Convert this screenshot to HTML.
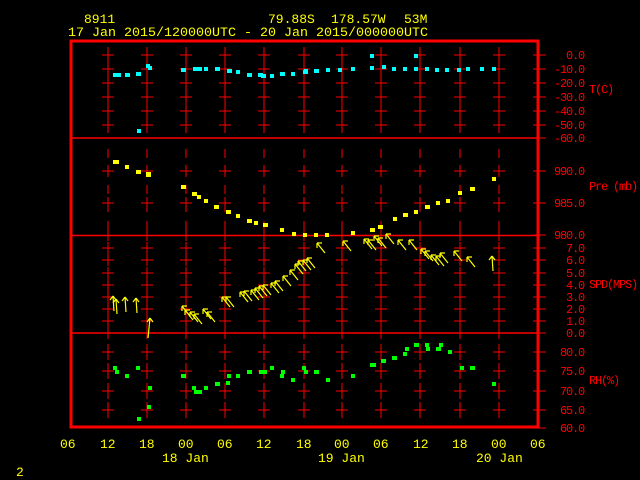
<!DOCTYPE html>
<html><head><style>
html,body{margin:0;padding:0;background:#000;width:640px;height:480px;overflow:hidden}
svg{display:block}
text{font-family:"Liberation Mono",monospace;font-size:13px}
.y{fill:#ffff00}
.r text{fill:#ff0000;font-size:12px;letter-spacing:-1.2px}
</style></head><body>
<svg width="640" height="480" viewBox="0 0 640 480" xmlns="http://www.w3.org/2000/svg">
<defs>
<path id="r8" d="M102 0h12M108 -8v16M141 0h12M147 -8v16M180 0h12M186 -8v16M219 0h12M225 -8v16M258 0h12M264 -8v16M298 0h12M304 -8v16M336 0h12M342 -8v16M375 0h12M381 -8v16M414 0h12M420 -8v16M454 0h12M460 -8v16M493 0h12M499 -8v16"/>
<path id="r6" d="M102 0h12M108 -6v12M141 0h12M147 -6v12M180 0h12M186 -6v12M219 0h12M225 -6v12M258 0h12M264 -6v12M298 0h12M304 -6v12M336 0h12M342 -6v12M375 0h12M381 -6v12M414 0h12M420 -6v12M454 0h12M460 -6v12M493 0h12M499 -6v12"/>
<path id="tk" d="M108 -6v12M147 -6v12M186 -6v12M225 -6v12M264 -6v12M304 -6v12M342 -6v12M381 -6v12M420 -6v12M460 -6v12M499 -6v12"/>
<path id="a" d="M8 10L0 0M0 0h5M0 0v5"/>
<path id="u" d="M1 15L0 0M0 0l-3 4M0 0l3 4"/>
</defs>
<g stroke="#ff0000" stroke-width="1" fill="none">
<use href="#r8" y="55"/><use href="#r8" y="69"/><use href="#r8" y="83"/><use href="#r8" y="97"/><use href="#r8" y="111"/><use href="#r8" y="125"/>
<use href="#r6" y="171"/><use href="#r6" y="203"/>
<path d="M108 149V231M147 149V231M186 149V231M225 149V231M264 149V231M304 149V231M342 149V231M381 149V231M420 149V231M460 149V231M499 149V231" stroke-dasharray="9 9"/>
<use href="#tk" y="235"/>
<use href="#r6" y="248"/><use href="#r6" y="260"/><use href="#r6" y="273"/><use href="#r6" y="285"/><use href="#r6" y="297"/><use href="#r6" y="309"/><use href="#r6" y="321"/>
<use href="#tk" y="333"/>
<use href="#r8" y="352"/><use href="#r8" y="371"/><use href="#r8" y="391"/><use href="#r8" y="410"/>
<path d="M72 138H538M72 235.5H538M72 333H538" stroke-width="1.5"/>
<path d="M533 55h13M533 69h13M533 83h13M533 97h13M533 111h13M533 125h13M533 138h13M533 171h13M533 203h13M533 235h13M533 248h13M533 260h13M533 273h13M533 285h13M533 297h13M533 309h13M533 321h13M533 333h13M533 352h13M533 371h13M533 391h13M533 410h13M533 428h13"/>
<rect x="71" y="41" width="467" height="386" stroke-width="3"/>
</g>
<g fill="#00ffff">
<rect x="113" y="73" width="5" height="4"/><rect x="116" y="73" width="5" height="4"/><rect x="125" y="73" width="5" height="4"/><rect x="136" y="72" width="5" height="4"/><rect x="146" y="64" width="4" height="4"/><rect x="148" y="66" width="4" height="4"/><rect x="137" y="129" width="4" height="4"/>
<rect x="181" y="68" width="5" height="4"/><rect x="193" y="67" width="5" height="4"/><rect x="197" y="67" width="5" height="4"/><rect x="204" y="67" width="4" height="4"/><rect x="215" y="67" width="5" height="4"/><rect x="227" y="69" width="5" height="4"/><rect x="236" y="70" width="4" height="4"/><rect x="247" y="73" width="5" height="4"/><rect x="258" y="73" width="5" height="4"/><rect x="261" y="74" width="5" height="4"/><rect x="270" y="74" width="4" height="4"/><rect x="280" y="72" width="5" height="4"/><rect x="291" y="72" width="4" height="4"/><rect x="303" y="70" width="5" height="4"/><rect x="304" y="69" width="4" height="4"/><rect x="314" y="69" width="5" height="4"/><rect x="326" y="68" width="4" height="4"/><rect x="338" y="68" width="4" height="4"/><rect x="351" y="67" width="4" height="4"/><rect x="370" y="54" width="4" height="4"/><rect x="370" y="66" width="4" height="4"/><rect x="382" y="65" width="4" height="4"/><rect x="392" y="67" width="4" height="4"/><rect x="403" y="67" width="4" height="4"/><rect x="414" y="54" width="4" height="4"/><rect x="414" y="67" width="4" height="4"/><rect x="425" y="67" width="4" height="4"/><rect x="435" y="68" width="4" height="4"/><rect x="445" y="68" width="4" height="4"/><rect x="457" y="68" width="4" height="4"/><rect x="466" y="67" width="4" height="4"/><rect x="480" y="67" width="4" height="4"/><rect x="492" y="67" width="4" height="4"/>
</g>
<g fill="#ffff00">
<rect x="113" y="160" width="6" height="4"/><rect x="125" y="165" width="4" height="4"/><rect x="136" y="170" width="5" height="4"/><rect x="146" y="172" width="5" height="5"/><rect x="181" y="185" width="5" height="4"/><rect x="192" y="192" width="5" height="4"/><rect x="197" y="195" width="4" height="4"/><rect x="204" y="199" width="4" height="4"/><rect x="214" y="205" width="5" height="4"/><rect x="226" y="210" width="5" height="4"/><rect x="236" y="214" width="4" height="4"/><rect x="247" y="219" width="5" height="4"/><rect x="254" y="221" width="4" height="4"/><rect x="263" y="223" width="5" height="4"/><rect x="280" y="228" width="4" height="4"/><rect x="292" y="232" width="4" height="4"/><rect x="303" y="233" width="4" height="4"/><rect x="314" y="233" width="4" height="4"/><rect x="325" y="233" width="4" height="4"/><rect x="351" y="231" width="4" height="4"/><rect x="370" y="228" width="5" height="4"/><rect x="378" y="225" width="5" height="4"/><rect x="393" y="217" width="4" height="4"/><rect x="403" y="213" width="5" height="4"/><rect x="414" y="210" width="4" height="4"/><rect x="425" y="205" width="5" height="4"/><rect x="436" y="201" width="4" height="4"/><rect x="446" y="199" width="4" height="4"/><rect x="458" y="191" width="4" height="4"/><rect x="470" y="187" width="5" height="4"/><rect x="492" y="177" width="4" height="4"/>
</g>
<g fill="#00ff00">
<rect x="113" y="366" width="4" height="4"/><rect x="115" y="370" width="4" height="4"/><rect x="125" y="374" width="4" height="4"/><rect x="136" y="366" width="4" height="4"/><rect x="148" y="386" width="4" height="4"/><rect x="147" y="405" width="4" height="4"/><rect x="137" y="417" width="4" height="4"/><rect x="181" y="374" width="5" height="4"/><rect x="192" y="386" width="4" height="4"/><rect x="194" y="390" width="8" height="4"/><rect x="204" y="386" width="4" height="4"/><rect x="215" y="382" width="5" height="4"/><rect x="226" y="381" width="4" height="4"/><rect x="227" y="374" width="4" height="4"/><rect x="236" y="374" width="4" height="4"/><rect x="247" y="370" width="5" height="4"/><rect x="259" y="370" width="8" height="4"/><rect x="270" y="366" width="4" height="4"/><rect x="281" y="370" width="4" height="4"/><rect x="280" y="374" width="4" height="4"/><rect x="291" y="378" width="4" height="4"/><rect x="302" y="366" width="4" height="4"/><rect x="304" y="370" width="4" height="4"/><rect x="314" y="370" width="5" height="4"/><rect x="326" y="378" width="4" height="4"/><rect x="351" y="374" width="4" height="4"/><rect x="370" y="363" width="6" height="4"/><rect x="381" y="359" width="5" height="4"/><rect x="392" y="356" width="5" height="4"/><rect x="403" y="352" width="4" height="4"/><rect x="405" y="347" width="4" height="4"/><rect x="414" y="343" width="5" height="4"/><rect x="425" y="343" width="4" height="4"/><rect x="426" y="347" width="4" height="4"/><rect x="436" y="347" width="5" height="4"/><rect x="439" y="343" width="4" height="4"/><rect x="448" y="350" width="4" height="4"/><rect x="460" y="366" width="4" height="4"/><rect x="470" y="366" width="5" height="4"/><rect x="492" y="382" width="4" height="4"/>
</g>
<g stroke="#ffff00" stroke-width="1.2" fill="none">
<use href="#u" x="113" y="296"/><use href="#u" x="116" y="299"/><use href="#u" x="125" y="297"/><use href="#u" x="136" y="298"/>
<path d="M148 338L150 318M150 318l-3 4M150 318l3 4"/>
<use href="#a" x="182" y="306"/><use href="#a" x="185" y="310"/><use href="#a" x="190" y="312"/><use href="#a" x="194" y="314"/><use href="#a" x="203" y="309"/><use href="#a" x="207" y="312"/>
<use href="#a" x="222" y="297"/><use href="#a" x="226" y="297"/><use href="#a" x="240" y="292"/><use href="#a" x="244" y="291"/><use href="#a" x="251" y="290"/><use href="#a" x="255" y="288"/><use href="#a" x="259" y="286"/><use href="#a" x="263" y="285"/><use href="#a" x="271" y="283"/><use href="#a" x="275" y="281"/><use href="#a" x="283" y="276"/><use href="#a" x="290" y="270"/><use href="#a" x="295" y="264"/><use href="#a" x="298" y="261"/><use href="#a" x="303" y="260"/><use href="#a" x="307" y="258"/><use href="#a" x="317" y="243"/><use href="#a" x="343" y="241"/>
<use href="#a" x="364" y="239"/><use href="#a" x="368" y="240"/><use href="#a" x="374" y="236"/><use href="#a" x="378" y="238"/><use href="#a" x="386" y="234"/><use href="#a" x="398" y="240"/><use href="#a" x="409" y="240"/><use href="#a" x="421" y="249"/><use href="#a" x="425" y="251"/><use href="#a" x="431" y="255"/><use href="#a" x="436" y="256"/><use href="#a" x="440" y="253"/><use href="#a" x="454" y="251"/><use href="#a" x="467" y="257"/>
<use href="#u" x="492" y="256"/>
</g>
<g class="y">
<text x="84" y="23">8911</text>
<text x="268" y="23">79.88S</text>
<text x="331" y="23">178.57W</text>
<text x="404" y="23">53M</text>
<text x="68" y="36" textLength="360" lengthAdjust="spacingAndGlyphs">17 Jan 2015/120000UTC - 20 Jan 2015/000000UTC</text>
<text x="60" y="448">06</text><text x="100" y="448">12</text><text x="139" y="448">18</text><text x="178" y="448">00</text><text x="217" y="448">06</text><text x="256" y="448">12</text><text x="296" y="448">18</text><text x="334" y="448">00</text><text x="373" y="448">06</text><text x="413" y="448">12</text><text x="452" y="448">18</text><text x="491" y="448">00</text><text x="530" y="448">06</text>
<text x="162" y="462">18 Jan</text><text x="318" y="462">19 Jan</text><text x="476" y="462">20 Jan</text>
<text x="16" y="476">2</text>
</g>
<g class="r" text-anchor="end">
<text x="584" y="59">0.0</text><text x="584" y="73">-10.0</text><text x="584" y="87">-20.0</text><text x="584" y="101">-30.0</text><text x="584" y="115">-40.0</text><text x="584" y="129">-50.0</text><text x="584" y="142">-60.0</text>
<text x="584" y="175">990.0</text><text x="584" y="207">985.0</text><text x="584" y="239">980.0</text>
<text x="584" y="252">7.0</text><text x="584" y="264">6.0</text><text x="584" y="277">5.0</text><text x="584" y="289">4.0</text><text x="584" y="301">3.0</text><text x="584" y="313">2.0</text><text x="584" y="325">1.0</text><text x="584" y="337">0.0</text>
<text x="584" y="356">80.0</text><text x="584" y="375">75.0</text><text x="584" y="395">70.0</text><text x="584" y="414">65.0</text><text x="584" y="432">60.0</text>
</g>
<g class="r">
<text x="589" y="93">T(C)</text>
<text x="589" y="190">Pre (mb)</text>
<text x="589" y="288">SPD(MPS)</text>
<text x="589" y="384">RH(%)</text>
</g>
</svg>
</body></html>
